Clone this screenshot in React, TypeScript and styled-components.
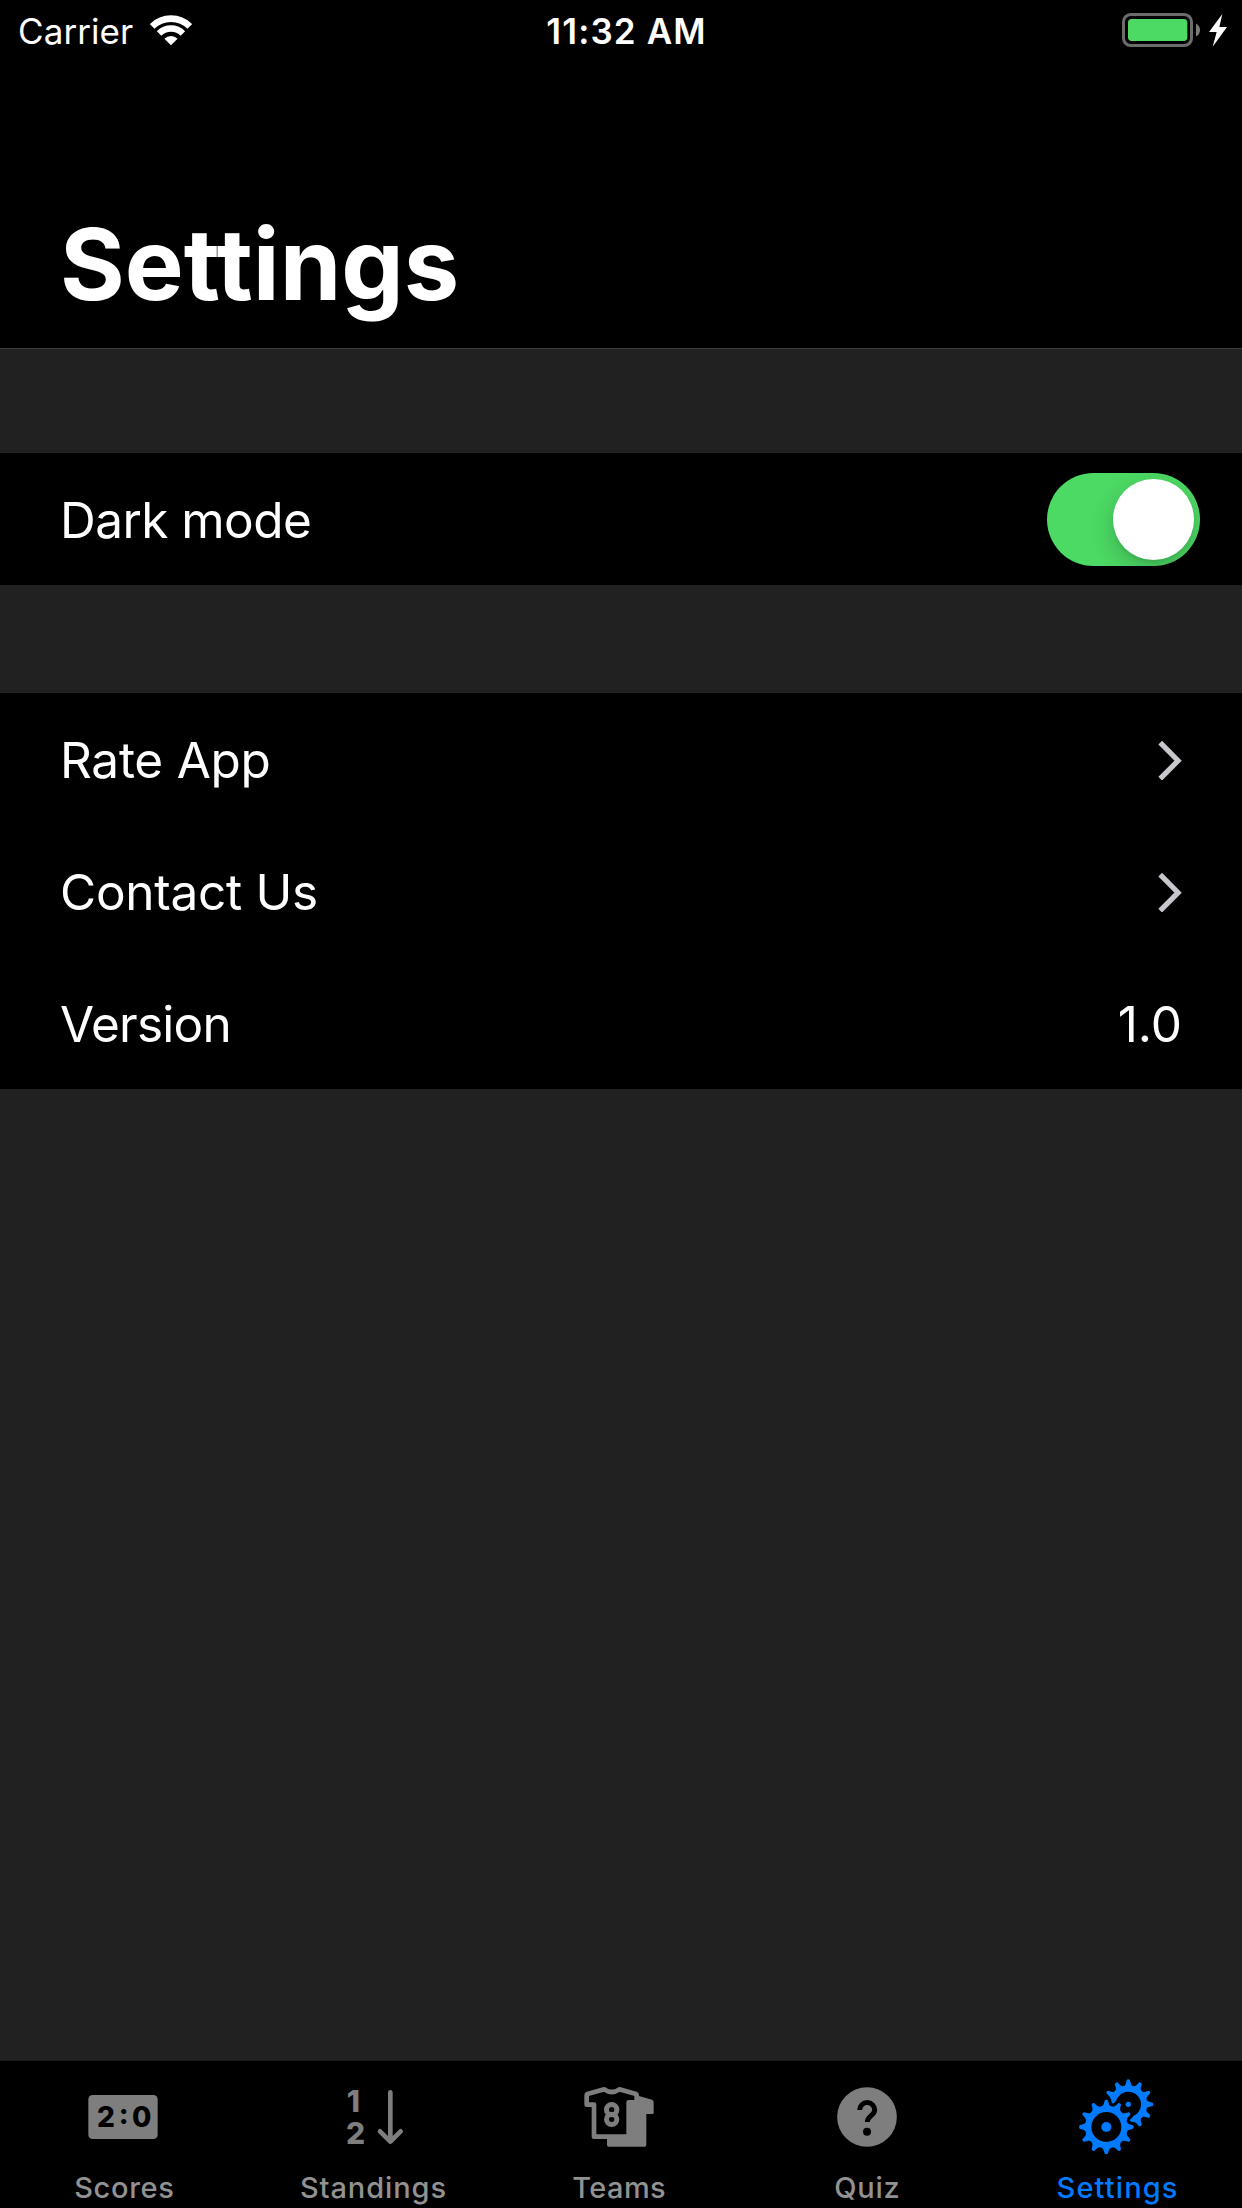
import React, { useState } from 'react';
import styled, { createGlobalStyle } from 'styled-components';

const GlobalStyle = createGlobalStyle`
  * { box-sizing: border-box; }
  body {
    margin: 0;
    background: #212121;
    color: #fff;
    font-family: Inter, 'Liberation Sans', sans-serif;
  }
`;

const Screen = styled.div`
  display: flex;
  flex-direction: column;
  width: 1242px;
  height: 2208px;
  overflow: hidden;
  background: #212121;
`;

const StatusBar = styled.header`
  display: grid;
  grid-template-columns: 1fr auto 1fr;
  align-items: center;
  height: 62px;
  background: #000;
  font-size: 35px;
  line-height: 62px;
`;

const Carrier = styled.div`
  display: flex;
  align-items: center;
  gap: 17px;
  padding-left: 18px;
  letter-spacing: 0.08px;
`;

const Clock = styled.div`
  padding-left: 11px;
  font-weight: 600;
  letter-spacing: 1.13px;
`;

const Power = styled.div`
  display: flex;
  justify-content: flex-end;
  padding-right: 15px;
`;

const StatusIcon = styled.svg`
  display: block;
  flex: none;
  margin-top: -2px;
`;

const TitleBar = styled.div`
  display: flex;
  align-items: flex-end;
  height: 287px;
  padding: 0 60px 24px;
  background: #000;
  border-bottom: 1px solid #3d3d3d;
`;

const Title = styled.h1`
  margin: 0;
  font-size: 99px;
  font-weight: 700;
  line-height: 120px;
`;

const Content = styled.main`
  display: flex;
  flex: 1;
  flex-direction: column;
`;

const Section = styled.section<{ $gap: number }>`
  margin-top: ${({ $gap }) => $gap}px;
  background: #000;
`;

const Row = styled.div<{ $end?: number }>`
  display: flex;
  align-items: center;
  justify-content: space-between;
  height: 132px;
  padding: 0 ${({ $end = 60 }) => $end}px 0 60px;
`;

const RowText = styled.span<{ $spacing?: number }>`
  padding-top: 2px;
  font-size: 49.5px;
  line-height: 60px;
  letter-spacing: ${({ $spacing = 0 }) => $spacing}px;
`;

const Toggle = styled.button<{ $on: boolean }>`
  display: flex;
  justify-content: ${({ $on }) => ($on ? 'flex-end' : 'flex-start')};
  width: 153px;
  height: 93px;
  margin: 1px 0 0;
  padding: 6px;
  overflow: hidden;
  border: 0;
  border-radius: 47px;
  background: ${({ $on }) => ($on ? '#4cd964' : '#39393d')};
`;

const Knob = styled.span`
  width: 81px;
  height: 81px;
  border-radius: 50%;
  background: #fff;
  box-shadow: 0 9px 24px rgba(0, 0, 0, 0.2), 0 3px 3px rgba(0, 0, 0, 0.06);
`;

const ChevronIcon = styled.svg`
  display: block;
  fill: none;
  stroke: #c7c7cc;
  stroke-width: 5.2;
`;

const TabBar = styled.nav`
  display: grid;
  grid-template-columns: 248px 250px 242px 254px 246px;
  height: 148px;
  padding-top: 9px;
  border-top: 1px solid #1b1b1b;
  background: #000;
`;

const Tab = styled.div<{ $active?: boolean }>`
  display: flex;
  flex-direction: column;
  align-items: center;
  gap: 10px;
  color: ${({ $active }) => ($active ? '#007aff' : '#7e7e7e')};
`;

const TabIcon = styled.svg`
  display: block;
  width: 90px;
  height: 90px;
  font-weight: 800;
`;

const TabLabel = styled.span<{ $active?: boolean; $spacing: number }>`
  padding-left: ${({ $spacing }) => $spacing}px;
  color: ${({ $active }) => ($active ? '#007aff' : '#929292')};
  font-size: 29px;
  font-weight: 500;
  line-height: 35px;
  letter-spacing: ${({ $spacing }) => $spacing}px;
`;

const Chevron = () => (
  <ChevronIcon width="24" height="42" viewBox="0 0 24 42">
    <path d="M2.2 4.7 20.1 22.7 2.2 40.7" />
  </ChevronIcon>
);

const Wifi = () => (
  <StatusIcon width="42" height="31" viewBox="0 0 126 93">
    <g fill="none" stroke="#fff">
      <path strokeWidth="20" d="M6.4 34.4A80 80 0 0 1 119.6 34.4" />
      <path strokeWidth="19" d="M27.3 55.3A50.5 50.5 0 0 1 98.7 55.3" />
    </g>
    <path fill="#fff" d="M63 91 43.2 71.2A28 28 0 0 1 82.8 71.2Z" />
  </StatusIcon>
);

const Battery = () => (
  <StatusIcon width="105" height="36" viewBox="66 36 315 108">
    <rect x="70.5" y="43.5" width="204" height="93" rx="22" fill="none" stroke="#6c6c6c" strokeWidth="9" />
    <rect x="84" y="57" width="178" height="66" rx="11" fill="#4cd964" />
    <path d="M288 71C304 76 304 104 288 109Z" fill="#7a7a7a" />
    <path d="M367 42 327 96H350L338 140 381 81H358Z" fill="#fff" />
  </StatusIcon>
);

/* Outline of a gear whose teeth flare out where they meet the rim. */
function gearPath(cx: number, cy: number, tip: number, rim: number, teeth: number) {
  const at = (r: number, a: number) =>
    `${(cx + r * Math.sin(a)).toFixed(2)} ${(cy - r * Math.cos(a)).toFixed(2)}`;
  const step = (Math.PI * 2) / teeth;
  const t = 6 / tip;
  let d = '';
  for (let i = 0; i < teeth; i++) {
    const a = i * step;
    d += `${i ? 'L' : 'M'}${at(rim, a - step * 0.38)}`;
    d += `Q${at(rim + 2, a - step * 0.24)} ${at(tip - 5, a - t)}`;
    d += `Q${at(tip, a - t)} ${at(tip, a)}`;
    d += `Q${at(tip, a + t)} ${at(tip - 5, a + t)}`;
    d += `Q${at(rim + 2, a + step * 0.24)} ${at(rim, a + step * 0.38)}`;
    d += `L${at(rim, a + step * 0.62)}`;
  }
  return d + 'Z';
}

const ScoresIcon = () => (
  <TabIcon viewBox="87 60 270 270">
    <rect x="115" y="135" width="208" height="132" rx="13" fill="currentColor" />
    <text x="141 206 246" y="231 222 231" fontSize="84" fill="#000">2:0</text>
  </TabIcon>
);

const StandingsIcon = () => (
  <TabIcon viewBox="144 60 270 270">
    <g fill="currentColor" fontSize="90">
      <text x="200" y="186">1</text>
      <text x="198" y="282">2</text>
    </g>
    <path
      d="M331 127V274M300 244 331 275 362 244"
      fill="none"
      stroke="currentColor"
      strokeWidth="14"
      strokeLinecap="round"
      strokeLinejoin="round"
    />
  </TabIcon>
);

const TeamsIcon = () => (
  <TabIcon viewBox="42 60 270 270">
    <path
      d="M237 138 276 149Q281 151 281 156V188Q281 192 277 192H259V285Q259 290 254 290H146Q141 290 141 285V260H200V160Z"
      fill="currentColor"
    />
    <path
      d="M133 118 82 132Q80 133 80 136V164H102V260H206V157H230V136Q230 133 228 132L178 118Q155 134 133 118Z"
      fill="#000"
      stroke="currentColor"
      strokeWidth="14"
      strokeLinejoin="round"
    />
    <g fill="none" stroke="currentColor" strokeWidth="15">
      <circle cx="155" cy="179" r="15.5" />
      <circle cx="155" cy="208" r="15.5" />
    </g>
  </TabIcon>
);

const QuizIcon = () => (
  <TabIcon viewBox="66 60 270 270">
    <circle cx="201" cy="201" r="89.5" fill="currentColor" />
    <path
      d="M179 180A22.5 22.5 0 0 1 224 180C224 197 202 197 202 216"
      fill="none"
      stroke="#000"
      strokeWidth="15"
    />
    <circle cx="201" cy="245" r="12" />
  </TabIcon>
);

const SettingsIcon = () => {
  const back = gearPath(265, 163, 75, 57, 12);
  const front = gearPath(199, 231, 82, 64, 12);
  return (
    <TabIcon viewBox="96 60 270 270">
      <path d={back} fill="currentColor" />
      <circle cx="265" cy="163" r="38" />
      <circle cx="265" cy="163" r="8" fill="currentColor" />
      <path d={front} stroke="#000" strokeWidth="19" strokeLinejoin="round" />
      <path d={front} fill="currentColor" />
      <circle cx="199" cy="231" r="45" />
      <circle cx="199" cy="231" r="15" fill="currentColor" />
    </TabIcon>
  );
};

const tabs = [
  { label: 'Scores', spacing: 0.66, Icon: ScoresIcon },
  { label: 'Standings', spacing: 0.91, Icon: StandingsIcon },
  { label: 'Teams', spacing: 0.37, Icon: TeamsIcon },
  { label: 'Quiz', spacing: 0.75, Icon: QuizIcon },
  { label: 'Settings', spacing: 1.13, Icon: SettingsIcon },
];

export default function App() {
  const [dark, setDark] = useState(true);
  return (
    <Screen>
      <GlobalStyle />
      <StatusBar>
        <Carrier>
          Carrier
          <Wifi />
        </Carrier>
        <Clock>11:32 AM</Clock>
        <Power>
          <Battery />
        </Power>
      </StatusBar>
      <TitleBar>
        <Title>Settings</Title>
      </TitleBar>
      <Content>
        <Section $gap={104}>
          <Row $end={42}>
            <RowText $spacing={-0.55}>Dark mode</RowText>
            <Toggle $on={dark} onClick={() => setDark(!dark)} aria-label="Dark mode">
              <Knob />
            </Toggle>
          </Row>
        </Section>
        <Section $gap={108}>
          <Row>
            <RowText $spacing={-0.25}>Rate App</RowText>
            <Chevron />
          </Row>
          <Row>
            <RowText $spacing={-0.28}>Contact Us</RowText>
            <Chevron />
          </Row>
          <Row>
            <RowText $spacing={-0.75}>Version</RowText>
            <RowText>1.0</RowText>
          </Row>
        </Section>
      </Content>
      <TabBar>
        {tabs.map(({ label, spacing, Icon }) => (
          <Tab key={label} $active={label === 'Settings'}>
            <Icon />
            <TabLabel $active={label === 'Settings'} $spacing={spacing}>
              {label}
            </TabLabel>
          </Tab>
        ))}
      </TabBar>
    </Screen>
  );
}
